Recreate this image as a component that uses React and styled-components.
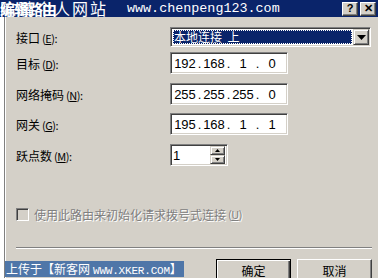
import React from 'react';
import styled, { createGlobalStyle } from 'styled-components';

const Global = createGlobalStyle`
  html, body {
    margin: 0;
    padding: 0;
    width: 378px;
    height: 278px;
    overflow: hidden;
    background: #d4d0c8;
  }
  body {
    font-family: "Noto Sans CJK SC", "Liberation Sans", sans-serif;
    font-size: 12px;
    color: #000;
  }
`;

const Screen = styled.div`
  width: 378px;
  height: 278px;
  display: flex;
  flex-direction: column;
  overflow: hidden;
  position: relative;
`;

const TitleBar = styled.div`
  height: 17px;
  background: #0a246a;
  display: flex;
  align-items: center;
  padding-right: 2px;
  position: relative;
  flex-shrink: 0;
`;

const TitleText = styled.div`
  flex: 1;
  color: #fff;
  font-size: 16px;
  line-height: 17px;
  white-space: nowrap;
  display: flex;
  align-items: center;
`;

const TitleCjk = styled.span`
  letter-spacing: 2px;
  width: 127px;
`;

const TitleUrl = styled.span`
  font-family: "Liberation Mono", monospace;
  font-size: 13.4px;
`;

const TitleOverlay = styled.span`
  position: absolute;
  left: 0;
  top: 0;
  color: #fff;
  font-size: 15px;
  line-height: 17px;
  font-weight: bold;
  letter-spacing: -1px;
`;

const CapButton = styled.div`
  width: 16px;
  height: 14px;
  margin-left: ${({ gap }) => gap || 0}px;
  box-sizing: border-box;
  background: #d4d0c8;
  border: 1px solid;
  border-color: #fff #404040 #404040 #fff;
  box-shadow: inset -1px -1px 0 #808080;
  display: flex;
  align-items: center;
  justify-content: center;
  font-family: "Liberation Sans", sans-serif;
  font-weight: bold;
  font-size: 11px;
  line-height: 1;
`;

const Main = styled.div`
  flex: 1;
  display: flex;
`;

const Behind = styled.div`
  width: 4px;
  background: #fff;
`;

const Dialog = styled.div`
  flex: 1;
  background: #d4d0c8;
  border-left: 1px solid #808080;
  box-shadow: inset 1px 0 0 #fff;
  padding: 10px 6px 0 11px;
  display: flex;
  flex-direction: column;
  position: relative;
`;

const Row = styled.div`
  display: flex;
  align-items: center;
  height: ${({ h }) => h}px;
  margin-top: ${({ mt }) => mt || 0}px;
`;

const Label = styled.div`
  width: 154px;
  font-size: 12px;
  white-space: nowrap;
`;

const Key = styled.span`
  font-size: 11px;
  margin-left: 2px;
  letter-spacing: -0.5px;
`;

const Underlined = styled.span`
  text-decoration: underline;
`;

const Sunken = styled.div`
  box-sizing: border-box;
  height: 100%;
  width: ${({ w }) => w}px;
  background: #fff;
  border: 1px solid;
  border-color: #808080 #fff #fff #808080;
  box-shadow: inset 1px 1px 0 #404040, inset -1px -1px 0 #d4d0c8;
  display: flex;
  align-items: center;
`;

const Selected = styled.div`
  flex: 1;
  margin: 0 1px 0 2px;
  height: 14px;
  background: #0a246a;
  color: #fff;
  outline: 1px dotted #fff;
  outline-offset: -1px;
  font-size: 12px;
  line-height: 14px;
  padding-left: 1px;
  white-space: pre;
`;

const ArrowButton = styled.div`
  box-sizing: border-box;
  width: ${({ w }) => w}px;
  height: ${({ h }) => h}px;
  margin-right: ${({ mr }) => mr || 0}px;
  background: #d4d0c8;
  border: 1px solid;
  border-color: #d4d0c8 #404040 #404040 #d4d0c8;
  box-shadow: inset 1px 1px 0 #fff, inset -1px -1px 0 #808080;
  display: flex;
  align-items: center;
  justify-content: center;
`;

const Segment = styled.span`
  width: 24px;
  text-align: center;
  font-family: "Liberation Sans", sans-serif;
  font-size: 13px;
`;

const Dot = styled.span`
  width: 5px;
  text-align: center;
  font-family: "Liberation Sans", sans-serif;
  font-size: 13px;
`;

const IpBox = styled(Sunken)`
  padding-left: 2px;
`;

const SpinText = styled.span`
  flex: 1;
  padding-left: 2px;
  font-family: "Liberation Sans", sans-serif;
  font-size: 13px;
`;

const SpinButtons = styled.div`
  display: flex;
  flex-direction: column;
  margin-right: 2px;
`;

const CheckRow = styled.div`
  display: flex;
  align-items: center;
  margin-top: 41px;
  height: 14px;
  color: #808080;
  text-shadow: 1px 1px 0 #fff;
  font-size: 12px;
  white-space: nowrap;
`;

const CheckBox = styled.div`
  box-sizing: border-box;
  width: 13px;
  height: 13px;
  margin-right: 5px;
  background: #d4d0c8;
  border: 1px solid;
  border-color: #808080 #fff #fff #808080;
  box-shadow: inset 1px 1px 0 #404040, inset -1px -1px 0 #d4d0c8;
`;

const Separator = styled.div`
  margin-top: 26px;
  height: 0;
  border-top: 1px solid #808080;
  border-bottom: 1px solid #fff;
`;

const Buttons = styled.div`
  display: flex;
  justify-content: flex-end;
  gap: 6px;
  margin-top: 10px;
`;

const Button = styled.div`
  box-sizing: border-box;
  width: 75px;
  height: 23px;
  background: #d4d0c8;
  border: 1px solid;
  border-color: ${({ primary }) => (primary ? '#000' : '#fff #404040 #404040 #fff')};
  box-shadow: ${({ primary }) =>
    primary
      ? 'inset 1px 1px 0 #fff, inset -1px -1px 0 #404040, inset -2px -2px 0 #808080'
      : 'inset -1px -1px 0 #808080'};
  display: flex;
  align-items: center;
  justify-content: center;
  font-size: 12px;
`;

const Watermark = styled.div`
  position: absolute;
  left: 0;
  bottom: 5px;
  height: 16px;
  padding: 0 2px 0 1px;
  background: #4f76a8;
  color: #fff;
  font-size: 12px;
  line-height: 16px;
  white-space: nowrap;
`;

const WatermarkLatin = styled.span`
  font-family: "Liberation Mono", monospace;
  font-size: 11px;
  letter-spacing: -0.2px;
  margin-left: 3px;
`;

const Arrow = ({ dir = 'down', size = 4 }) => (
  <svg width={size * 2 + 1} height={size + 1} viewBox={`0 0 ${size * 2 + 1} ${size + 1}`}>
    {dir === 'down' ? (
      <polygon points={`0,0 ${size * 2 + 1},0 ${size + 0.5},${size + 1}`} fill="#000" />
    ) : (
      <polygon points={`0,${size + 1} ${size * 2 + 1},${size + 1} ${size + 0.5},0`} fill="#000" />
    )}
  </svg>
);

const ip = (parts) => (
  <IpBox w={118}>
    {parts.map((p, i) => (
      <React.Fragment key={i}>
        <Segment>{p}</Segment>
        {i < 3 && <Dot>.</Dot>}
      </React.Fragment>
    ))}
  </IpBox>
);

export default function App() {
  return (
    <Screen>
      <Global />
      <TitleBar>
        <TitleText>
          <TitleCjk>陈鹏个人网站</TitleCjk>
          <TitleUrl>www.chenpeng123.com</TitleUrl>
        </TitleText>
        <TitleOverlay>编辑路由</TitleOverlay>
        <CapButton>?</CapButton>
        <CapButton gap={2}>✕</CapButton>
      </TitleBar>
      <Main>
        <Behind />
        <Dialog>
          <Row h={20}>
            <Label>
              接口<Key>(<Underlined>E</Underlined>):</Key>
            </Label>
            <Sunken w={201}>
              <Selected>{'本地连接  上'}</Selected>
              <ArrowButton w={16} h={16} mr={1}>
                <Arrow />
              </ArrowButton>
            </Sunken>
          </Row>
          <Row h={22} mt={5}>
            <Label>
              目标<Key>(<Underlined>D</Underlined>):</Key>
            </Label>
            {ip(['192', '168', '1', '0'])}
          </Row>
          <Row h={22} mt={9}>
            <Label>
              网络掩码<Key>(<Underlined>N</Underlined>):</Key>
            </Label>
            {ip(['255', '255', '255', '0'])}
          </Row>
          <Row h={22} mt={8}>
            <Label>
              网关<Key>(<Underlined>G</Underlined>):</Key>
            </Label>
            {ip(['195', '168', '1', '1'])}
          </Row>
          <Row h={22} mt={9}>
            <Label>
              跃点数<Key>(<Underlined>M</Underlined>):</Key>
            </Label>
            <Sunken w={58}>
              <SpinText>1</SpinText>
              <SpinButtons>
                <ArrowButton w={15} h={9}>
                  <Arrow dir="up" size={2} />
                </ArrowButton>
                <ArrowButton w={15} h={9}>
                  <Arrow size={2} />
                </ArrowButton>
              </SpinButtons>
            </Sunken>
          </Row>
          <CheckRow>
            <CheckBox />
            使用此路由来初始化请求拨号式连接<Key>(<Underlined>U</Underlined>)</Key>
          </CheckRow>
          <Separator />
          <Buttons>
            <Button primary>确定</Button>
            <Button>取消</Button>
          </Buttons>
          <Watermark>
            上传于【新客网<WatermarkLatin>WWW.XKER.COM</WatermarkLatin>】
          </Watermark>
        </Dialog>
      </Main>
    </Screen>
  );
}
